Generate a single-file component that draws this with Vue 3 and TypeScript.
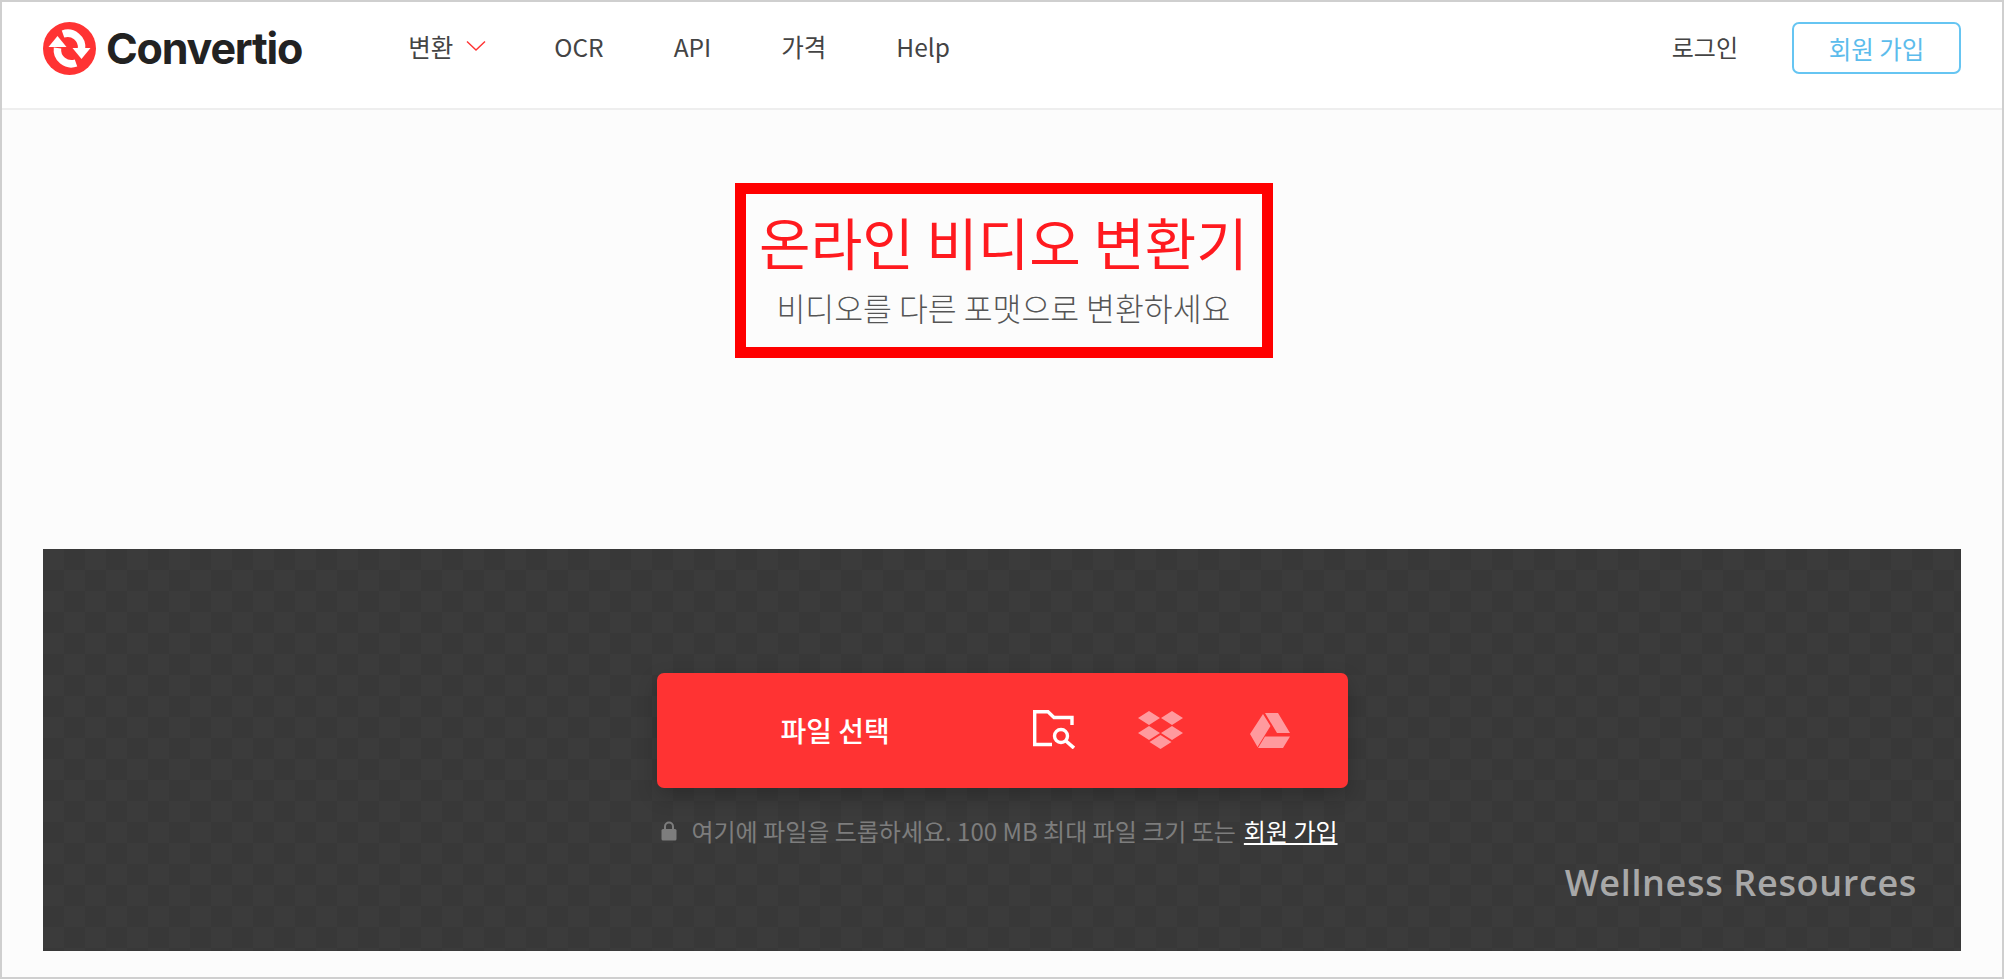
<script setup lang="ts">
const navItems = [
  { label: '변환', caret: true },
  { label: 'OCR' },
  { label: 'API' },
  { label: '가격' },
  { label: 'Help' },
]
</script>

<template>
  <div class="page">
    <header class="topbar">
      <a class="brand">
        <svg class="brand-mark" viewBox="0 0 53 53">
          <circle cx="26.5" cy="26.5" r="26.5" fill="#ff3333" />
          <path d="M38.5 27 A14 14 0 0 0 20 12" fill="none" stroke="#fff" stroke-width="7.5" />
          <path d="M29.5 26 L47.5 26 L38.5 37 Z" fill="#fff" />
          <path d="M14.5 26 A14 14 0 0 0 33 41" fill="none" stroke="#fff" stroke-width="7.5" />
          <path d="M5.5 25 L23.5 25 L14.5 14 Z" fill="#fff" />
        </svg>
        <span class="brand-name">Convertio</span>
      </a>
      <nav class="nav">
        <a v-for="item in navItems" :key="item.label" class="nav-link">
          {{ item.label }}
          <svg v-if="item.caret" class="caret" viewBox="0 0 20 10">
            <path d="M1 0.5 L10 9 L19 0.5" fill="none" stroke="#ff3333" stroke-width="1.4" />
          </svg>
        </a>
      </nav>
      <div class="account">
        <a class="login">로그인</a>
        <a class="signup">회원 가입</a>
      </div>
    </header>

    <main class="content">
      <div class="heading">
        <h1>온라인 비디오 변환기</h1>
        <p>비디오를 다른 포맷으로 변환하세요</p>
      </div>

      <section class="dropzone">
        <div class="picker">
          <span class="picker-label">파일 선택</span>
          <span class="picker-icons">
            <svg class="icon-folder" viewBox="0 0 42 39">
              <path d="M19 34.5 H1.7 V1.7 H15 L21 7.5 H39 V15" fill="none" stroke="#fff" stroke-width="3.4" />
              <circle cx="28" cy="26" r="6.5" fill="none" stroke="#fff" stroke-width="3.4" />
              <path d="M33 31 L41 38" stroke="#fff" stroke-width="3.6" />
            </svg>
            <svg class="icon-dropbox" viewBox="0 0 45 38">
              <path
                fill="#ff9a9e"
                d="M11 0 L22 7 L11 14 L0 7 Z M34 0 L45 7 L34 14 L23 7 Z M11 15 L22 22 L11 29 L0 22 Z M34 15 L45 22 L34 29 L23 22 Z M22.5 24 L33.5 31 L22.5 38 L11.5 31 Z"
              />
            </svg>
            <svg class="icon-drive" viewBox="0 0 40 36">
              <path
                fill="#ff9a9e"
                d="M15 1 H28 L40 21 H27 Z M13 2 L20.5 14 L7.5 35 L0 22 Z M15 24.5 H40 L33 36 H8 Z"
              />
            </svg>
          </span>
        </div>
        <p class="hint">
          <svg class="lock" viewBox="0 0 16 20">
            <path d="M4 9 V5.5 A4 4 0 0 1 12 5.5 V9" fill="none" stroke="#7d7d7d" stroke-width="2" />
            <rect x="0.5" y="8" width="15" height="11.5" rx="1.5" fill="#7d7d7d" />
          </svg>
          <span>여기에 파일을 드롭하세요. 100 MB 최대 파일 크기 또는</span>
          <a>회원 가입</a>
        </p>
        <span class="watermark">Wellness Resources</span>
      </section>
    </main>
  </div>
</template>

<style scoped>
.page {
  box-sizing: border-box;
  height: 979px;
  display: flex;
  flex-direction: column;
  border: 2px solid #cfcfcf;
  background: #fcfcfc;
  font-family: 'Noto Sans CJK KR', 'Noto Sans', sans-serif;
  overflow: hidden;
}

.topbar {
  flex: none;
  box-sizing: border-box;
  height: 108px;
  display: flex;
  align-items: center;
  padding: 0 41px;
  background: #fff;
  border-bottom: 2px solid #eeeeee;
}

.brand {
  display: flex;
  align-items: center;
  gap: 10px;
  margin-top: -14px;
}

.brand-mark {
  width: 53px;
  height: 53px;
}

.brand-name {
  font-family: Inter, 'Liberation Sans', sans-serif;
  font-size: 43px;
  font-weight: 700;
  letter-spacing: -1.2px;
  color: #222;
  line-height: 1;
}

.nav {
  display: flex;
  align-items: center;
  gap: 70px;
  margin-left: 106px;
  margin-top: -18px;
}

.nav-link {
  display: flex;
  align-items: center;
  gap: 13px;
  font-size: 24.5px;
  color: #444;
}

.caret {
  width: 20px;
  height: 10px;
  margin-right: -2px;
}

.account {
  display: flex;
  align-items: center;
  gap: 54px;
  margin-left: auto;
  margin-top: -14px;
}

.login {
  margin-bottom: 3px;
  font-size: 24px;
  color: #444;
}

.signup {
  box-sizing: border-box;
  width: 169px;
  height: 52px;
  display: flex;
  align-items: center;
  justify-content: center;
  border: 2px solid #66c5f2;
  border-radius: 7px;
  font-size: 24.5px;
  color: #5cbcec;
}

.content {
  flex: 1;
  display: flex;
  flex-direction: column;
  align-items: center;
  padding: 73px 41px 26px;
}

.heading {
  box-sizing: border-box;
  width: 538px;
  height: 175px;
  margin-left: 3px;
  border: 11px solid #ff0000;
  text-align: center;
}

.heading h1 {
  margin: 6px 0 0;
  font-size: 56px;
  font-weight: 400;
  line-height: 82px;
  color: #ff1a1f;
}

.heading p {
  margin: 4px 0 0;
  font-size: 31.4px;
  font-weight: 300;
  line-height: 44px;
  color: #555;
}

.dropzone {
  position: relative;
  align-self: stretch;
  flex: 1;
  margin-top: 191px;
  display: flex;
  flex-direction: column;
  align-items: center;
  padding-top: 124px;
  background-color: #3b3b3b;
  background-image:
    linear-gradient(45deg, #383838 25%, transparent 25%, transparent 75%, #383838 75%),
    linear-gradient(45deg, #383838 25%, transparent 25%, transparent 75%, #383838 75%);
  background-size: 42px 42px;
  background-position: 0 0, 21px 21px;
}

.picker {
  box-sizing: border-box;
  width: 691px;
  height: 115px;
  display: flex;
  align-items: center;
  padding-left: 124px;
  background: #ff3333;
  border-radius: 7px;
  box-shadow: 0 8px 20px rgba(0, 0, 0, 0.22);
}

.picker-label {
  width: 252px;
  margin-top: -2px;
  font-size: 28px;
  font-weight: 500;
  color: #fff;
}

.picker-icons {
  display: flex;
  align-items: center;
  gap: 63px;
  margin-top: -2px;
}

.icon-folder {
  width: 42px;
  height: 39px;
}

.icon-dropbox {
  width: 45px;
  height: 38px;
}

.icon-drive {
  width: 40px;
  height: 36px;
  margin-left: 4px;
}

.hint {
  margin: 25px 5px 0 0;
  display: flex;
  align-items: center;
  font-size: 24px;
  color: #7d7d7d;
}

.lock {
  width: 16px;
  height: 20px;
  margin-right: 14px;
}

.hint a {
  margin-left: 8px;
  color: #fff;
  text-decoration: underline;
}

.watermark {
  position: absolute;
  right: 44px;
  bottom: 47px;
  font-family: 'Open Sans', sans-serif;
  font-size: 36px;
  font-weight: 600;
  letter-spacing: 0.65px;
  line-height: 1.2;
  color: #a8a8a8;
}
</style>
